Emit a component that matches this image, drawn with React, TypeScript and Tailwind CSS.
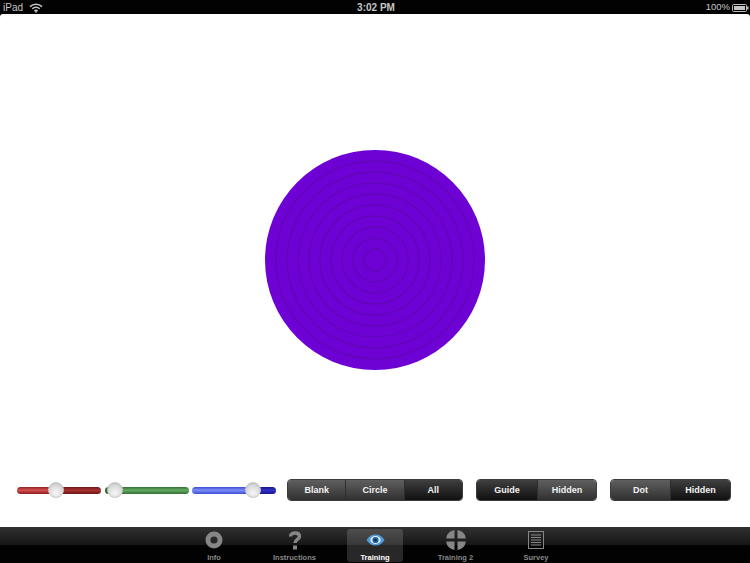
import React from "react";

const font = "font-['Liberation_Sans',Arial,sans-serif]";

const rings = [11, 22, 33, 44, 55, 66, 77, 88, 99];

const Wifi = () => (
  <svg width="14" height="10" viewBox="0 0 14 10" fill="none" stroke="#c8c8c8" strokeWidth="1.5">
    <path d="M1 3.6C4.4 .5 9.6 .5 13 3.6" />
    <path d="M3.2 5.8C5.4 3.9 8.6 3.9 10.8 5.8" />
    <path d="M5.4 7.8C6.3 7.1 7.7 7.1 8.6 7.8" />
    <path d="M7 10L5.6 8.6C6.4 8 7.6 8 8.4 8.6Z" fill="#c8c8c8" stroke="none" />
  </svg>
);

const Battery = () => (
  <svg width="17" height="8" viewBox="0 0 17 8">
    <rect x=".5" y=".5" width="14" height="7" rx="1" fill="none" stroke="#bdbdbd" />
    <rect x="2" y="2" width="11" height="4" fill="#c4c4c4" />
    <rect x="15" y="2.5" width="1.5" height="3" fill="#bdbdbd" />
  </svg>
);

const StatusBar = () => (
  <div className={`${font} grid h-[14px] shrink-0 grid-cols-3 items-center bg-black pl-[3px] pr-[1px] text-[10px] text-[#c6c6c6]`}>
    <div className="flex items-center gap-[6px]">
      <span>iPad</span>
      <Wifi />
    </div>
    <div className="text-center font-bold">3:02 PM</div>
    <div className="flex items-center justify-end gap-[2px]">
      <span className="text-[9.500px]">100%</span>
      <Battery />
    </div>
  </div>
);

const Target = () => (
  <svg width="220" height="220" viewBox="0 0 220 220">
    <circle cx="110" cy="110" r="110" fill="#6d00d4" />
    {rings.map((r) => (
      <circle key={r} cx="110" cy="110" r={r} fill="none" stroke="#6303bb" strokeWidth="1.500" />
    ))}
  </svg>
);

const Slider = ({ fill, rest, at }: { fill: string; rest: string; at: number }) => (
  <div className="relative h-[7px] w-[84px]">
    <div className="flex h-full overflow-hidden rounded-full">
      <div className={fill} style={{ width: at }} />
      <div className={`flex-1 ${rest}`} />
    </div>
    <div
      className="absolute top-[-5px] h-4 w-4 -translate-x-1/2 rounded-full border border-[#c8c8c8] bg-[radial-gradient(circle_at_50%_70%,#f6f6f6,#dcdcdc_55%,#b4b4b4)]"
      style={{ left: at }}
    />
  </div>
);

const Segmented = ({ items, width }: { items: { label: string; on?: boolean; w: number }[]; width: string }) => (
  <div className={`${font} flex h-[22px] ${width} overflow-hidden rounded-[4px] border border-[#3a3a3a] text-[9px] font-bold text-[#f2f2f2]`}>
    {items.map((it, i) => (
      <div
        key={it.label}
        className={`flex items-center justify-center pt-[2px] ${i > 0 ? "border-l border-[#2c2c2c]" : ""} ${
          it.on
            ? "bg-gradient-to-b from-[#3e3e3e] to-[#0f0f0f]"
            : "bg-gradient-to-b from-[#5e5e5e] to-[#2f2f2f]"
        }`}
        style={{ width: it.w }}
      >
        {it.label}
      </div>
    ))}
  </div>
);

const InfoIcon = () => (
  <svg width="18" height="18" viewBox="0 0 18 18">
    <circle cx="9" cy="9" r="8.500" fill="#858585" />
    <circle cx="9" cy="9" r="3.600" fill="#262626" />
  </svg>
);

const QuestionIcon = () => (
  <svg width="14" height="19" viewBox="0 0 14 19" fill="none">
    <path d="M2.500 5.500C2.500 3.200 4.500 2 7 2C9.700 2 11.500 3.400 11.500 5.500C11.500 8.500 7 8.500 7 12" stroke="#858585" strokeWidth="3.400" />
    <rect x="5" y="14.500" width="4" height="4" fill="#858585" />
  </svg>
);

const EyeIcon = () => (
  <svg width="19" height="12" viewBox="0 0 22 14">
    <path d="M0.500 7C4 1.500 7.500 0.500 11 0.500C14.500 0.500 18 1.500 21.500 7C18 12.500 14.500 13.500 11 13.500C7.500 13.500 4 12.500 .5 7Z" fill="#4d9ad8" />
    <ellipse cx="11" cy="7" rx="6" ry="4.600" fill="#e2eef7" />
    <circle cx="11" cy="7" r="3.600" fill="#1f5f96" />
    <circle cx="11" cy="7" r="1.500" fill="#0d2a44" />
  </svg>
);

const CrossIcon = () => (
  <svg width="20" height="20" viewBox="0 0 20 20">
    <path d="M8.500 0.100V8.500H0.100A10 10 0 0 1 8.500 0.100Z" fill="#858585" />
    <path d="M11.500 0.100V8.500H19.900A10 10 0 0 0 11.500 0.100Z" fill="#858585" />
    <path d="M8.500 19.900V11.500H0.100A10 10 0 0 0 8.500 19.900Z" fill="#858585" />
    <path d="M11.500 19.900V11.500H19.900A10 10 0 0 1 11.500 19.900Z" fill="#858585" />
  </svg>
);

const SurveyIcon = () => (
  <svg width="16" height="18" viewBox="0 0 16 18" fill="none" stroke="#858585">
    <rect x=".5" y=".5" width="15" height="17" />
    <path d="M3 4H13M3 6.500H13M3 9H13M3 11.500H13M3 14H13" strokeWidth="1" />
  </svg>
);

const tabs = [
  { label: "Info", icon: <InfoIcon /> },
  { label: "Instructions", icon: <QuestionIcon /> },
  { label: "Training", icon: <EyeIcon />, on: true },
  { label: "Training 2", icon: <CrossIcon /> },
  { label: "Survey", icon: <SurveyIcon /> },
];

const TabBar = () => (
  <div className="flex h-[36px] shrink-0 justify-center gap-[24.500px] bg-[linear-gradient(#2f2f2f,#141414_50%,#000000_50%)] pt-[2px]">
    {tabs.map((t) => (
      <div
        key={t.label}
        className={`${font} flex h-[33px] w-[56px] flex-col items-center rounded-[3px] text-[7.500px] font-bold ${
          t.on ? "bg-white/15 text-white" : "text-[#858585]"
        }`}
      >
        <div className="flex h-[22px] items-center">{t.icon}</div>
        <div className="mt-[2px] whitespace-nowrap leading-[9px]">{t.label}</div>
      </div>
    ))}
  </div>
);

export default function App() {
  return (
    <div className="flex h-[563px] w-[750px] flex-col overflow-hidden bg-black opacity-[0.99]">
      <StatusBar />
      <div className="flex flex-1 flex-col rounded-t-[3px] bg-white">
        <div className="flex flex-1 justify-center pt-[136px]">
          <Target />
        </div>
        <div className="flex items-center pb-[26px] pl-[17px]">
          <div className="flex w-[259px] items-center justify-between">
            <Slider fill="bg-[linear-gradient(#8f1f1f,#d65050_45%,#8c1a1a)]" rest="bg-[linear-gradient(#6e1212,#a83030_45%,#6a1010)]" at={39} />
            <Slider fill="bg-[linear-gradient(#1f4f1f,#2f6a2f_45%,#1f4f1f)]" rest="bg-[linear-gradient(#2e702e,#62aa62_45%,#2e702e)]" at={10} />
            <Slider fill="bg-[linear-gradient(#3a4cd8,#7c8cf5_45%,#3a4cd8)]" rest="bg-[linear-gradient(#14148c,#2f2fc8_45%,#14148c)]" at={61} />
          </div>
          <div className="ml-[11px] flex gap-[13px]">
            <Segmented
              width="w-[176px]"
              items={[
                { label: "Blank", w: 58 },
                { label: "Circle", w: 59 },
                { label: "All", w: 59, on: true },
              ]}
            />
            <Segmented
              width="w-[121px]"
              items={[
                { label: "Guide", w: 61, on: true },
                { label: "Hidden", w: 60 },
              ]}
            />
            <Segmented
              width="w-[121px]"
              items={[
                { label: "Dot", w: 60 },
                { label: "Hidden", w: 61, on: true },
              ]}
            />
          </div>
        </div>
      </div>
      <TabBar />
    </div>
  );
}
